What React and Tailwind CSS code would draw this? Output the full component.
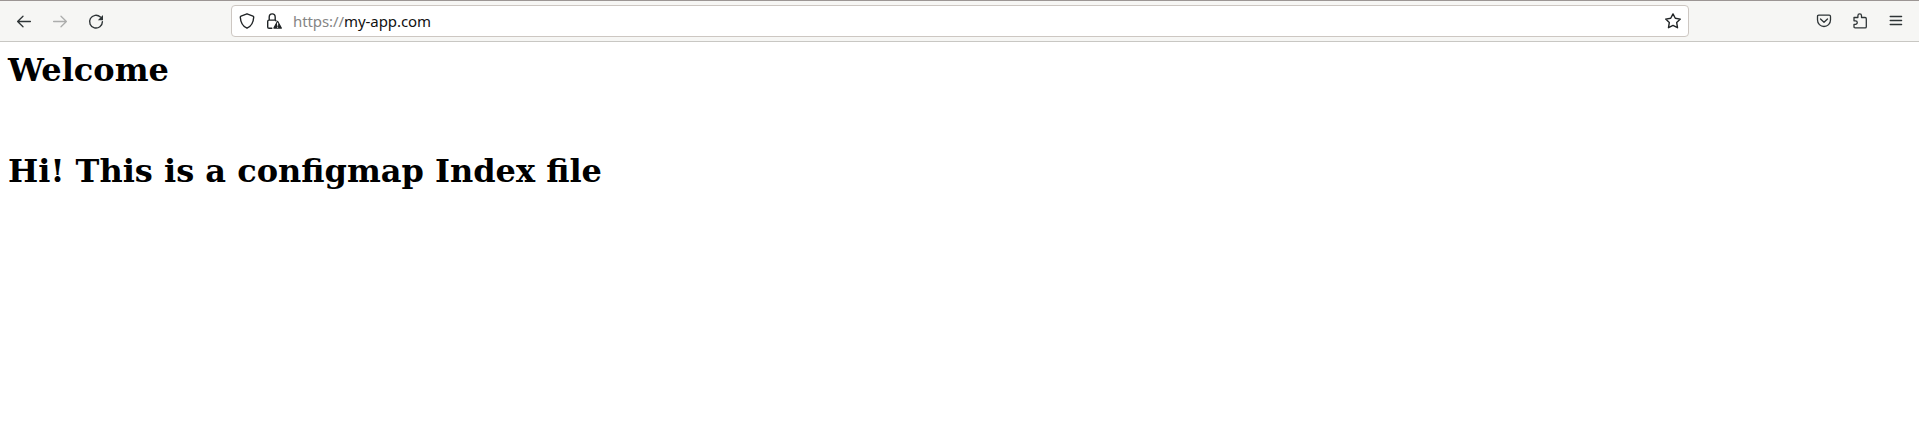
function Icon({ children, className = "" }) {
  return (
    <svg
      viewBox="0 0 16 16"
      fill="none"
      stroke="currentColor"
      strokeWidth="1.3"
      strokeLinecap="round"
      strokeLinejoin="round"
      className={`h-4 w-4 shrink-0 ${className}`}
    >
      {children}
    </svg>
  );
}

function Toolbar() {
  return (
    <header className="flex h-[42px] w-full items-center border-t border-b border-t-[#9c9694] border-b-[#c8c7c3] bg-[#f6f6f4] text-[#2e3436]">
      <div className="flex w-[231px] shrink-0 items-center gap-5 pt-px pl-4">
        <Icon>
          <path d="M1.6 7.5H14.4M7 2.2L1.6 7.5L7 12.8" />
        </Icon>
        <Icon className="text-[#acadac]">
          <path d="M14.4 7.5H1.6M9 2.2L14.4 7.5L9 12.8" />
        </Icon>
        <Icon>
          <path d="M12.4 3A6.4 6.4 0 1 0 14.4 7.7" strokeWidth="1.4" />
          <path d="M15 1V6.2H9.8Z" fill="currentColor" stroke="none" />
        </Icon>
      </div>

      <div className="flex h-8 w-[1458px] shrink-0 items-center rounded border border-[#cdc7c2] bg-white pr-[7px] pl-[7px] text-[#202426]">
        <Icon>
          <path d="M8 .8L14 3.1Q14.8 3.4 14.7 4.2C14.4 9.4 12.2 13.3 8 15.2C3.8 13.3 1.6 9.4 1.3 4.2Q1.2 3.4 2 3.1Z" strokeWidth="1.4" />
        </Icon>
        <Icon className="ml-[11px]">
          <path d="M5.8 15.2H3Q1.7 15.2 1.7 13.9V8.4Q1.7 7.1 3 7.1H8.8Q9.8 7.1 10 7.9M3.2 7V4.2A3 3.3 0 0 1 9.2 4.2V7" strokeWidth="1.4" />
          <path d="M11.6 8.3L15.3 15.1H7.9Z" fill="currentColor" strokeWidth="1.2" />
          <path d="M11.6 10V12.2M11.6 14V14.2" stroke="white" strokeWidth="1.1" />
        </Icon>
        <div className="ml-[11px] grow font-['Noto_Sans',sans-serif] text-[15px] leading-5 tracking-[-0.08px] text-[#111]">
          <span className="text-[#858585]">https://</span>my-app.com
        </div>
        <Icon>
          <path d="M8 .9L10.3 5.3L15.3 6.1L11.7 9.6L12.5 14.7L8 12.4L3.5 14.7L4.3 9.6L.7 6.1L5.7 5.3Z" strokeWidth="1.4" />
        </Icon>
      </div>

      <div className="flex grow items-center justify-end gap-5 pr-[15px]">
        <Icon>
          <path d="M2.8 2.2H13.2Q14.5 2.2 14.5 3.5V7A6.5 6.5 0 0 1 1.5 7V3.5Q1.5 2.2 2.8 2.2Z" />
          <path d="M4.5 6L8 9.3L11.5 6" />
        </Icon>
        <Icon>
          <path d="M2.1 4.5H5.9V2.7A1.8 1.8 0 0 1 9.5 2.7V4.5H13.1Q14.3 4.5 14.3 5.7V13.7Q14.3 14.9 13.1 14.9H3.2Q2 14.9 2 13.7V11.3H3.5A1.75 1.75 0 0 0 3.5 7.8H2V4.5Z" />
        </Icon>
        <Icon>
          <path d="M2.2 3.5H13.6M2.2 7.5H13.6M2.2 11.5H13.6" />
        </Icon>
      </div>
    </header>
  );
}

export default function App() {
  return (
    <div className="min-h-screen bg-white">
      <Toolbar />
      <main className="px-2 pt-[9px] font-['DejaVu_Serif',serif] text-[32px] leading-[38px] font-bold text-black">
        <h1>Welcome</h1>
        <h1 className="mt-[63px]">Hi! This is a configmap Index file</h1>
      </main>
    </div>
  );
}
